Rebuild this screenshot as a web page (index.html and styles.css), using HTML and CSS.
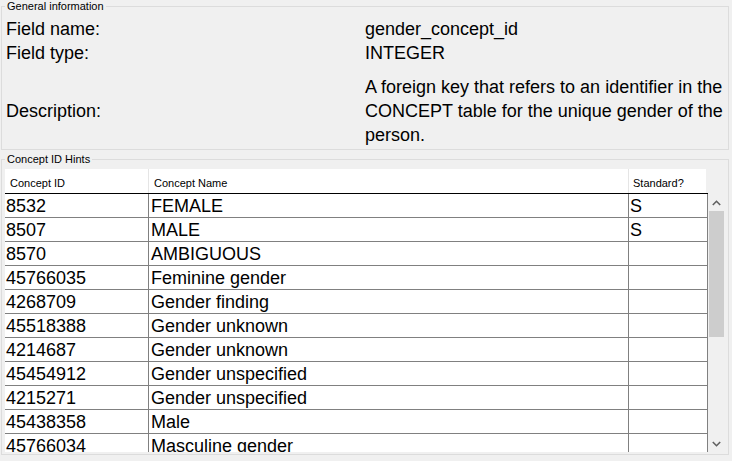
FILE: index.html
```html
<!DOCTYPE html>
<html>
<head>
<meta charset="utf-8">
<link rel="stylesheet" href="styles.css">
</head>
<body>
<fieldset class="group info">
  <legend>General information</legend>
  <div class="info-grid">
    <div class="label">Field name:</div>
    <div class="value">gender_concept_id</div>
    <div class="label">Field type:</div>
    <div class="value">INTEGER</div>
    <div class="label desc-label">Description:</div>
    <div class="value desc">A foreign key that refers to an identifier in the CONCEPT table for the unique gender of the person.</div>
  </div>
</fieldset>
<fieldset class="group hints">
  <legend>Concept ID Hints</legend>
  <div class="header-row">
    <div class="hcell c1">Concept ID</div>
    <div class="hcell c2">Concept Name</div>
    <div class="hcell c3">Standard?</div>
  </div>
  <div class="body-wrap">
    <div class="rows">
      <div class="row"><div class="cell c1">8532</div><div class="cell c2">FEMALE</div><div class="cell c3">S</div></div>
      <div class="row"><div class="cell c1">8507</div><div class="cell c2">MALE</div><div class="cell c3">S</div></div>
      <div class="row"><div class="cell c1">8570</div><div class="cell c2">AMBIGUOUS</div><div class="cell c3"></div></div>
      <div class="row"><div class="cell c1">45766035</div><div class="cell c2">Feminine gender</div><div class="cell c3"></div></div>
      <div class="row"><div class="cell c1">4268709</div><div class="cell c2">Gender finding</div><div class="cell c3"></div></div>
      <div class="row"><div class="cell c1">45518388</div><div class="cell c2">Gender unknown</div><div class="cell c3"></div></div>
      <div class="row"><div class="cell c1">4214687</div><div class="cell c2">Gender unknown</div><div class="cell c3"></div></div>
      <div class="row"><div class="cell c1">45454912</div><div class="cell c2">Gender unspecified</div><div class="cell c3"></div></div>
      <div class="row"><div class="cell c1">4215271</div><div class="cell c2">Gender unspecified</div><div class="cell c3"></div></div>
      <div class="row"><div class="cell c1">45438358</div><div class="cell c2">Male</div><div class="cell c3"></div></div>
      <div class="row"><div class="cell c1">45766034</div><div class="cell c2">Masculine gender</div><div class="cell c3"></div></div>
    </div>
    <div class="scrollbar">
      <div class="sb-btn">
        <svg width="9" height="6" viewBox="0 0 9 6"><polyline points="0.8,5 4.5,1.3 8.2,5" fill="none" stroke="#606060" stroke-width="1.6"/></svg>
      </div>
      <div class="sb-thumb"></div>
      <div class="sb-space"></div>
      <div class="sb-btn">
        <svg width="9" height="6" viewBox="0 0 9 6"><polyline points="0.8,1 4.5,4.7 8.2,1" fill="none" stroke="#606060" stroke-width="1.6"/></svg>
      </div>
    </div>
  </div>
</fieldset>
</body>
</html>
```
FILE: styles.css
```css
* { box-sizing: border-box; }
html, body { margin: 0; padding: 0; }
body {
  width: 732px;
  height: 461px;
  overflow: hidden;
  background: #f0f0f0;
  font-family: "Liberation Sans", Arial, sans-serif;
  font-size: 18px;
  color: #000;
}
.group {
  margin: 0 0 0 1px;
  width: 728px;
  border: 1px solid #dcdcdc;
  padding: 0 3px;
  min-width: 0;
}
.group legend {
  font-family: "Liberation Sans", Arial, sans-serif;
  font-size: 11px;
  line-height: 13px;
  padding: 0 2px;
  color: #000;
}
.info { padding-top: 4px; padding-bottom: 2px; }
.info-grid {
  display: grid;
  grid-template-columns: 360px 1fr;
  line-height: 24px;
  align-items: center;
}
.info-grid .label { padding-left: 1px; }
.info-grid .desc-label, .info-grid .desc { margin-top: 10px; }
.hints { margin-top: 3px; padding-top: 3px; padding-bottom: 2px; }
.header-row {
  display: flex;
  width: 703px;
  height: 25px;
  border-bottom: 1px solid #000;
}
.hcell {
  background: #fff;
  font-family: "Liberation Sans", Arial, sans-serif;
  font-size: 11px;
  line-height: 14px;
  padding-top: 7px;
  color: #000;
}
.hcell.c1 { width: 143px; padding-left: 5px; }
.hcell.c2 { width: 480px; border-left: 1px solid #e5e5e5; padding-left: 5px; }
.hcell.c3 { width: 78px; border-left: 1px solid #e5e5e5; padding-left: 4px; }
.body-wrap {
  display: flex;
  height: 258px;
}
.rows {
  width: 703px;
  height: 258px;
  overflow: hidden;
  background: #fff;
}
.row {
  display: flex;
  height: 24px;
  border-bottom: 1px solid #808080;
}
.cell {
  height: 23px;
  line-height: 21px;
  padding-top: 2px;
  border-right: 1px solid #808080;
  white-space: nowrap;
}
.cell.c1 { width: 144px; padding-left: 1px; }
.cell.c2 { width: 480px; padding-left: 2px; }
.cell.c3 { width: 79px; padding-left: 1px; }
.scrollbar {
  width: 17px;
  height: 258px;
  display: flex;
  flex-direction: column;
  background: #f0f0f0;
}
.sb-btn {
  height: 17px;
  display: flex;
  align-items: center;
  justify-content: center;
}
.sb-thumb {
  height: 126px;
  margin: 0 1px 0 1px;
  background: #cdcdcd;
}
.sb-space { flex: 1; }
```
